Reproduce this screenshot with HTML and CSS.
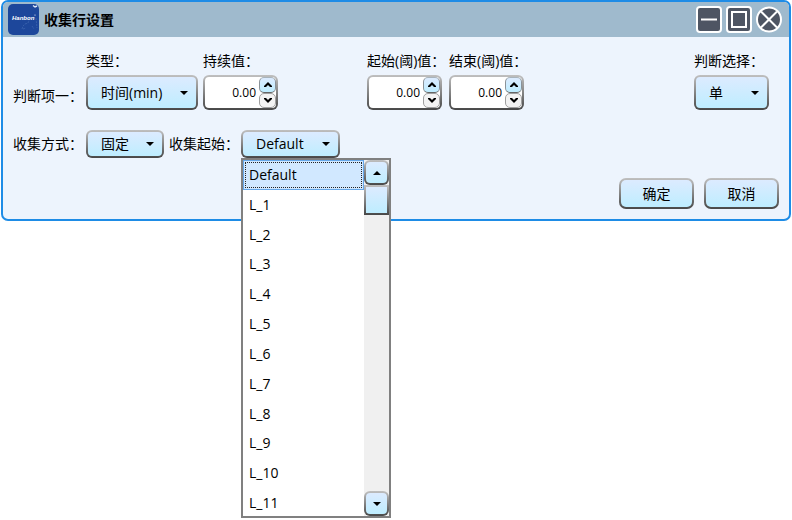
FILE: index.html
```html
<!DOCTYPE html>
<html lang="zh-CN">
<head>
<meta charset="utf-8">
<title>收集行设置</title>
<link rel="stylesheet" href="styles.css">
</head>
<body>
<main class="window">
  <header class="titlebar">
    <svg class="logo" viewBox="0 0 31 31" aria-hidden="true">
      <rect width="31" height="31" rx="5" fill="#1d479b"/>
      <path d="M14 25l1-3 2-2 3-1 2-5 3-1 3 1 1 10M24 22l2 3M15 25l3-1" fill="none" stroke="#4068b2" stroke-width=".7" stroke-dasharray="2 1"/>
      <path d="M25 1.500l2 1.500 2-1" fill="none" stroke="#dfe9fa" stroke-width="1.4"/>
      <text x="4" y="16" class="logo-text">Hanbon</text>
      <circle cx="27" cy="11" r=".6" fill="#fff"/>
    </svg>
    <h1 class="title">收集行设置</h1>
    <div class="window-buttons">
      <button class="window-button" type="button" aria-label="最小化">
        <svg viewBox="0 0 26 27"><rect x="1" y="1" width="24" height="25" rx="3" fill="#4e5563" stroke="#fff" stroke-width="2"/><path d="M5 13.500h16" stroke="#fff" stroke-width="2"/></svg>
      </button>
      <button class="window-button" type="button" aria-label="最大化">
        <svg viewBox="0 0 26 27"><rect x="1" y="1" width="24" height="25" rx="3" fill="#4e5563" stroke="#fff" stroke-width="2"/><rect x="6" y="6" width="14" height="15" fill="none" stroke="#fff" stroke-width="2"/></svg>
      </button>
      <button class="window-button" type="button" aria-label="关闭">
        <svg viewBox="0 0 26 27"><circle cx="13" cy="13.5" r="12" fill="#4e5563" stroke="#fff" stroke-width="2"/><path d="M5 5.500l16 16M21 5.500l-16 16" stroke="#fff" stroke-width="2"/></svg>
      </button>
    </div>
  </header>

  <form class="content">
    <div class="row row-judge">
      <span class="row-label">判断项一：</span>
      <div class="field">
        <label for="type">类型：</label>
        <div class="combo combo-wide">
          <select id="type"><option>时间(min)</option></select>
          <svg class="caret" viewBox="0 0 8 4"><path d="M0 0h8L4 4z"/></svg>
        </div>
      </div>
      <div class="field field-duration">
        <label for="duration">持续值：</label>
        <div class="spin">
          <input id="duration" type="text" value="0.00">
          <div class="spin-buttons">
            <button class="up" type="button" aria-label="增加"><svg viewBox="0 0 8 5"><path d="M0 5V4l4-4 4 4v1H6L4 3 2 5z"/></svg></button>
            <button type="button" aria-label="减少"><svg viewBox="0 0 8 5"><path d="M0 0v1l4 4 4-4V0H6L4 2 2 0z"/></svg></button>
          </div>
        </div>
      </div>
      <div class="field field-start">
        <label for="start">起始(阈)值：</label>
        <div class="spin">
          <input id="start" type="text" value="0.00">
          <div class="spin-buttons">
            <button class="up" type="button" aria-label="增加"><svg viewBox="0 0 8 5"><path d="M0 5V4l4-4 4 4v1H6L4 3 2 5z"/></svg></button>
            <button type="button" aria-label="减少"><svg viewBox="0 0 8 5"><path d="M0 0v1l4 4 4-4V0H6L4 2 2 0z"/></svg></button>
          </div>
        </div>
      </div>
      <div class="field">
        <label for="end">结束(阈)值：</label>
        <div class="spin">
          <input id="end" type="text" value="0.00">
          <div class="spin-buttons">
            <button class="up" type="button" aria-label="增加"><svg viewBox="0 0 8 5"><path d="M0 5V4l4-4 4 4v1H6L4 3 2 5z"/></svg></button>
            <button type="button" aria-label="减少"><svg viewBox="0 0 8 5"><path d="M0 0v1l4 4 4-4V0H6L4 2 2 0z"/></svg></button>
          </div>
        </div>
      </div>
      <div class="field field-choice">
        <label for="choice">判断选择：</label>
        <div class="combo combo-choice">
          <select id="choice"><option>单</option></select>
          <svg class="caret" viewBox="0 0 8 4"><path d="M0 0h8L4 4z"/></svg>
        </div>
      </div>
    </div>

    <div class="row row-collect">
      <label class="row-label" for="mode">收集方式：</label>
      <div class="combo combo-mode">
        <select id="mode"><option>固定</option></select>
        <svg class="caret" viewBox="0 0 8 4"><path d="M0 0h8L4 4z"/></svg>
      </div>
      <label class="from-label" for="from">收集起始：</label>
      <div class="combo combo-from">
        <select id="from"><option>Default</option></select>
        <svg class="caret" viewBox="0 0 8 4"><path d="M0 0h8L4 4z"/></svg>
        <div class="popup">
          <ul class="options" role="listbox" aria-label="收集起始">
            <li class="selected" role="option" aria-selected="true">Default</li>
            <li role="option">L_1</li>
            <li role="option">L_2</li>
            <li role="option">L_3</li>
            <li role="option">L_4</li>
            <li role="option">L_5</li>
            <li role="option">L_6</li>
            <li role="option">L_7</li>
            <li role="option">L_8</li>
            <li role="option">L_9</li>
            <li role="option">L_10</li>
            <li role="option">L_11</li>
          </ul>
          <div class="scrollbar">
            <button type="button" aria-label="向上滚动"><svg viewBox="0 0 8 4"><path d="M0 4h8L4 0z"/></svg></button>
            <div class="thumb"></div>
            <button class="scroll-down" type="button" aria-label="向下滚动"><svg viewBox="0 0 8 4"><path d="M0 0h8L4 4z"/></svg></button>
          </div>
        </div>
      </div>
    </div>

    <div class="actions">
      <button class="action" type="submit">确定</button>
      <button class="action" type="button">取消</button>
    </div>
  </form>
</main>
</body>
</html>
```
FILE: styles.css
```css
:root {
  --edge: linear-gradient(#c0c0c0, #484848);
  --face: linear-gradient(#dcebff, #beedff);
}

* {
  box-sizing: border-box;
}

body {
  min-height: 100vh;
  margin: 0;
  padding: 0 1px;
  background: #fff;
  color: #000;
  font: 14px/18px "Open Sans", "Noto Sans CJK SC", sans-serif;
}

button,
input,
select {
  margin: 0;
  padding: 0;
  color: inherit;
  font: inherit;
}

button {
  display: flex;
  align-items: center;
  justify-content: center;
}

.window {
  border: 2px solid #1e8ce6;
  border-radius: 7px;
  background: #edf4fd;
}

.titlebar {
  display: flex;
  align-items: center;
  height: 35px;
  padding: 0 7px 0 5px;
  border-radius: 5px 5px 0 0;
  background: #9fbacd;
}

.logo {
  width: 31px;
  height: 31px;
}

.logo-text {
  fill: #fff;
  font: italic bold 6px "Liberation Sans", sans-serif;
}

.title {
  margin: 0 0 0 5px;
  font-size: 14px;
  font-weight: 600;
}

.window-buttons {
  display: flex;
  gap: 4px;
  margin-left: auto;
}

.window-button {
  width: 26px;
  height: 27px;
  border: 0;
  background: none;
}

.window-button svg {
  width: 26px;
  height: 27px;
}

.content {
  padding: 15px 10px 10px;
}

.row {
  display: flex;
  gap: 5px;
}

.row-judge {
  align-items: flex-end;
  padding-right: 10px;
}

.row-label {
  width: 68px;
  line-height: 28px;
  white-space: nowrap;
}

.field {
  display: flex;
  flex-direction: column;
  gap: 5px;
}

.field label {
  white-space: nowrap;
}

.field-duration,
.field-start,
.spin {
  width: 75px;
}

.field-start {
  margin: 0 2px 0 84px;
}

.field-start + .field {
  width: 75px;
}

.field-choice {
  width: 75px;
  margin-left: auto;
}

.combo {
  position: relative;
  height: 35px;
}

.combo select {
  width: 100%;
  height: 100%;
  padding: 0 13px;
  border: 2px solid transparent;
  border-radius: 6px;
  background: var(--face) padding-box, var(--edge) border-box;
  appearance: none;
}

.caret {
  position: absolute;
  top: 50%;
  right: 10px;
  width: 8px;
  height: 4px;
  margin-top: -2px;
  pointer-events: none;
}

.combo-wide {
  width: 112px;
}

.spin {
  display: flex;
  height: 35px;
  border: 2px solid transparent;
  border-radius: 6px;
  background: linear-gradient(#fff, #fff) padding-box, var(--edge) border-box;
}

.spin input {
  flex: 1;
  min-width: 0;
  border: 0;
  background: none;
  font-size: 12px;
  text-align: right;
}

.spin-buttons {
  display: flex;
  flex-direction: column;
  width: 17px;
  margin-left: 3px;
}

.spin-buttons button {
  flex: 1;
  border: 1px solid #a0a0a0;
  border-radius: 5px;
  background: #f3f3f3;
}

.spin-buttons .up {
  border-color: #a8b4bc #8a9298 #666;
  background: var(--face);
}

.spin-buttons svg {
  width: 8px;
  height: 5px;
}

.row-collect {
  margin-top: 20px;
}

.row-collect .combo {
  height: 28px;
}

.combo-mode {
  width: 78px;
}

.from-label {
  width: 67px;
  line-height: 28px;
  white-space: nowrap;
}

.combo-from {
  width: 99px;
}

.popup {
  position: absolute;
  z-index: 1;
  top: 100%;
  left: 0;
  display: flex;
  width: 150px;
  height: 360px;
  overflow: hidden;
  border: 2px solid #808080;
  background: #fff;
}

.options {
  display: grid;
  flex: 1;
  grid-template-rows: repeat(12, 1fr);
  height: 358px;
  margin: 0;
  padding: 0;
  list-style: none;
}

.options li {
  display: flex;
  align-items: center;
  padding: 0 6px;
}

.options .selected {
  padding: 0 5px;
  border: 1px solid #66a7e8;
  outline: 1px dotted #222;
  outline-offset: -3px;
  background: #d1e8ff;
}

.scrollbar {
  display: flex;
  flex-direction: column;
  width: 25px;
  background: #f0f0f0;
}

.scrollbar button,
.thumb {
  border: 2px solid transparent;
  background: var(--face) padding-box, var(--edge) border-box;
}

.scrollbar button {
  height: 25px;
  border-radius: 6px;
}

.scrollbar svg {
  width: 8px;
  height: 4px;
}

.thumb {
  height: 30px;
}

.scrollbar .scroll-down {
  margin-top: auto;
}

.actions {
  display: flex;
  justify-content: flex-end;
  gap: 10px;
  margin-top: 20px;
}

.action {
  width: 75px;
  height: 31px;
  border: 2px solid transparent;
  border-radius: 7px;
  background: var(--face) padding-box, var(--edge) border-box;
}
```
